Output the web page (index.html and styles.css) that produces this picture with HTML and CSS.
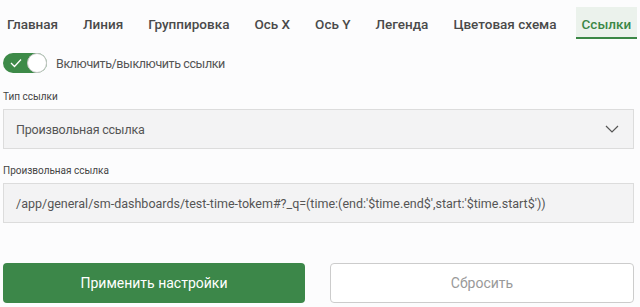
FILE: index.html
```html
<!DOCTYPE html>
<html lang="ru">
<head>
    <meta charset="UTF-8">
    <meta name="viewport" content="width=device-width, initial-scale=1.0">
    <title>Настройки</title>
    <link rel="stylesheet" href="styles.css">
</head>
<body>

    <!-- Tabs -->
    <div class="tabs">
        <div class="tab">Главная</div>
        <div class="tab">Линия</div>
        <div class="tab">Группировка</div>
        <div class="tab">Ось X</div>
        <div class="tab">Ось Y</div>
        <div class="tab">Легенда</div>
        <div class="tab">Цветовая схема</div>
        <div class="tab active">Ссылки</div>
    </div>

    <!-- Switch -->
    <div class="switch-row">
        <div class="switch">
            <svg class="switch-check" width="12" height="10" viewBox="0 0 12 10">
                <path d="M1 5 L4.5 8.5 L11 1.5" fill="none" stroke="#fff" stroke-width="1.3"/>
            </svg>
            <div class="switch-knob"></div>
        </div>
        <span class="switch-label">Включить/выключить ссылки</span>
    </div>

    <!-- Link type -->
    <div class="field">
        <div class="field-label">Тип ссылки</div>
        <div class="select">
            <span>Произвольная ссылка</span>
            <svg width="14" height="8" viewBox="0 0 14 8">
                <path d="M1 1 L7 7 L13 1" fill="none" stroke="#555" stroke-width="1.2"/>
            </svg>
        </div>
    </div>

    <!-- Custom link -->
    <div class="field">
        <div class="field-label">Произвольная ссылка</div>
        <div class="input">/app/general/sm-dashboards/test-time-tokem#?_q=(time:(end:'$time.end$',start:'$time.start$'))</div>
    </div>

    <!-- Buttons -->
    <div class="buttons">
        <button class="btn btn-primary">Применить настройки</button>
        <button class="btn btn-secondary">Сбросить</button>
    </div>

</body>
</html>
```

FILE: styles.css
```css
/* Global Styles */
body {
    font-family: Roboto, Arial, sans-serif;
    margin: 0;
    padding: 0 6px 0 3px;
    background: #fcfcfd;
    color: #444;
    white-space: nowrap;
}

/* Tabs */
.tabs {
    display: flex;
    gap: 13px;
    margin-left: -2px;
}

.tab {
    padding: 0 6px;
    height: 30px;
    margin-top: 7px;
    line-height: 34px;
    font-size: 13.5px;
    font-weight: 500;
    color: #4a4a4a;
    border-bottom: 2px solid transparent;
}

.tab.active {
    color: #3b8746;
    background: #ebf2ec;
    border-bottom-color: #3b8746;
}

/* Switch */
.switch-row {
    display: flex;
    align-items: center;
    margin-top: 14px;
    gap: 9px;
}

.switch {
    position: relative;
    width: 44px;
    height: 20px;
    border-radius: 10px;
    background: #3d8a48;
}

.switch-check {
    position: absolute;
    left: 7px;
    top: 5px;
}

.switch-knob {
    position: absolute;
    right: 0;
    top: 0;
    width: 18px;
    height: 18px;
    border-radius: 50%;
    background: #fff;
    border: 1px solid #c8c8c8;
}

.switch-label {
    font-size: 12.5px;
    letter-spacing: -0.4px;
    color: #555;
}

/* Fields */
.field {
    margin-top: 18px;
}

.field + .field {
    margin-top: 16px;
}

.field-label {
    font-size: 10px;
    color: #444;
    margin-bottom: 7px;
}

.select,
.input {
    display: flex;
    align-items: center;
    justify-content: space-between;
    height: 38px;
    padding: 0 14px 0 12px;
    background: #f3f3f4;
    border: 1px solid #dcdcdc;
    font-size: 12.5px;
    color: #555;
}

.select span {
    letter-spacing: -0.2px;
}

/* Buttons */
.buttons {
    display: flex;
    gap: 25px;
    margin-top: 40px;
}

.btn {
    flex: 1;
    height: 40px;
    border-radius: 4px;
    font-family: inherit;
    font-size: 14px;
    cursor: pointer;
}

.btn-primary {
    background: #3c8749;
    color: #fff;
    border: none;
}

.btn-secondary {
    background: #fff;
    color: #999;
    border: 1px solid #ccc;
}
```
